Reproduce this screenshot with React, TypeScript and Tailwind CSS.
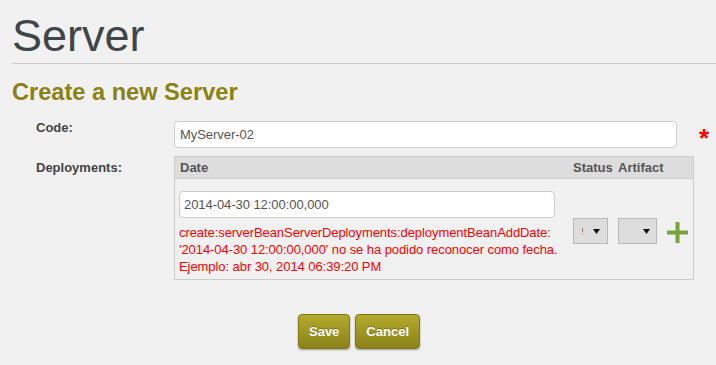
import React from "react";

function Caret() {
  return (
    <svg width="7" height="5" viewBox="0 0 7 5" className="block">
      <path d="M0 0 L7 0 L3.5 5 Z" fill="#111" />
    </svg>
  );
}

export default function App() {
  return (
    <div
      className="w-[716px] h-[365px] overflow-hidden bg-[#f1f1f1]"
      style={{ fontFamily: '"Liberation Sans", Arial, sans-serif' }}
    >
      <div className="pl-[12px]">
        <h1 className="mt-[13px] text-[45px] leading-[46px] text-[#3f4649] font-normal">Server</h1>
        <div className="mt-[4px] border-t border-[#cccccc]" />
        <h2 className="mt-[14px] text-[23.6px] leading-[28px] font-bold text-[#8b8115]">Create a new Server</h2>
      </div>

      {/* Code row */}
      <div className="mt-[13px] flex items-start h-[29px]">
        <div className="w-[174px] pl-[36px] text-[13px] leading-[17px] font-bold text-[#444]">Code:</div>
        <div className="mt-[2px] w-[503px] h-[27px] bg-white border border-[#cccccc] rounded-[4px] flex items-center pl-[5px] text-[13px] text-[#555] tracking-[-0.05px]">
          MyServer-02
        </div>
        <div className="ml-[22px] h-[29px]">
          <div className="mt-[6px] text-[26px] leading-[26px] font-bold text-[#ff0000]">*</div>
        </div>
      </div>

      {/* Deployments row */}
      <div className="mt-[8px] flex items-start">
        <div className="w-[174px] pl-[36px] mt-[3px] text-[13px] leading-[17px] font-bold text-[#444]">Deployments:</div>
        <div className="w-[520px]">
          <div className="h-[23px] border border-[#cccccc] bg-[#dddddd] flex text-[13px] leading-[21px] font-bold text-[#555]">
            <div className="w-[398px] pl-[5px]">Date</div>
            <div className="w-[45px]">Status</div>
            <div>Artifact</div>
          </div>
          <div className="border-l border-r border-b border-[#cccccc] flex items-start">
            <div className="w-[398px] pl-[4px] pt-[12px] pb-[4px]">
              <div className="w-[376px] h-[27px] bg-white border border-[#cccccc] rounded-[4px] flex items-center pl-[4px] text-[13px] text-[#555] tracking-[-0.06px]">
                2014-04-30 12:00:00,000
              </div>
              <div className="mt-[6px] text-[13px] leading-[17px] text-[#ff0000] whitespace-nowrap tracking-[-0.07px]">
                <div>create:serverBeanServerDeployments:deploymentBeanAddDate:</div>
                <div>'2014-04-30 12:00:00,000' no se ha podido reconocer como fecha.</div>
                <div>Ejemplo: abr 30, 2014 06:39:20 PM</div>
              </div>
            </div>
            <div className="w-[45px] mt-[39px]">
              <div className="w-[35px] h-[26px] bg-[#dddddd] border border-[#b8b8b8] flex items-center">
                <div className="ml-[8px] flex flex-col items-center">
                  <span className="block w-[1px] h-[4px] bg-[#b07a4a]" />
                  <span className="block w-[1px] h-[1px] mt-[1px] bg-[#b07a4a]" />
                </div>
                <div className="ml-auto mr-[7px]"><Caret /></div>
              </div>
            </div>
            <div className="mt-[39px] flex items-start">
              <div className="w-[39px] h-[26px] bg-[#dddddd] border border-[#b8b8b8] flex items-center justify-end pr-[6px]">
                <Caret />
              </div>
              <svg width="21" height="21" viewBox="0 0 21 21" className="ml-[10px] mt-[4px]">
                <rect x="8.5" y="0" width="4" height="21" fill="#7aa23a" />
                <rect x="0" y="8.5" width="21" height="4" fill="#7aa23a" />
              </svg>
            </div>
          </div>
        </div>
      </div>

      {/* Buttons */}
      <div className="mt-[34px] flex justify-center gap-[5px] pl-[2px]">
        <button className="h-[35px] px-[10px] rounded-[4px] border border-[#807812] bg-gradient-to-b from-[#b4aa2e] to-[#8a8218] text-white text-[13px] font-bold shadow-[0_1px_2px_rgba(0,0,0,0.35)] [text-shadow:0_-1px_0_rgba(0,0,0,0.25)]">
          Save
        </button>
        <button className="h-[35px] px-[10px] rounded-[4px] border border-[#807812] bg-gradient-to-b from-[#b4aa2e] to-[#8a8218] text-white text-[13px] font-bold shadow-[0_1px_2px_rgba(0,0,0,0.35)] [text-shadow:0_-1px_0_rgba(0,0,0,0.25)]">
          Cancel
        </button>
      </div>
    </div>
  );
}
